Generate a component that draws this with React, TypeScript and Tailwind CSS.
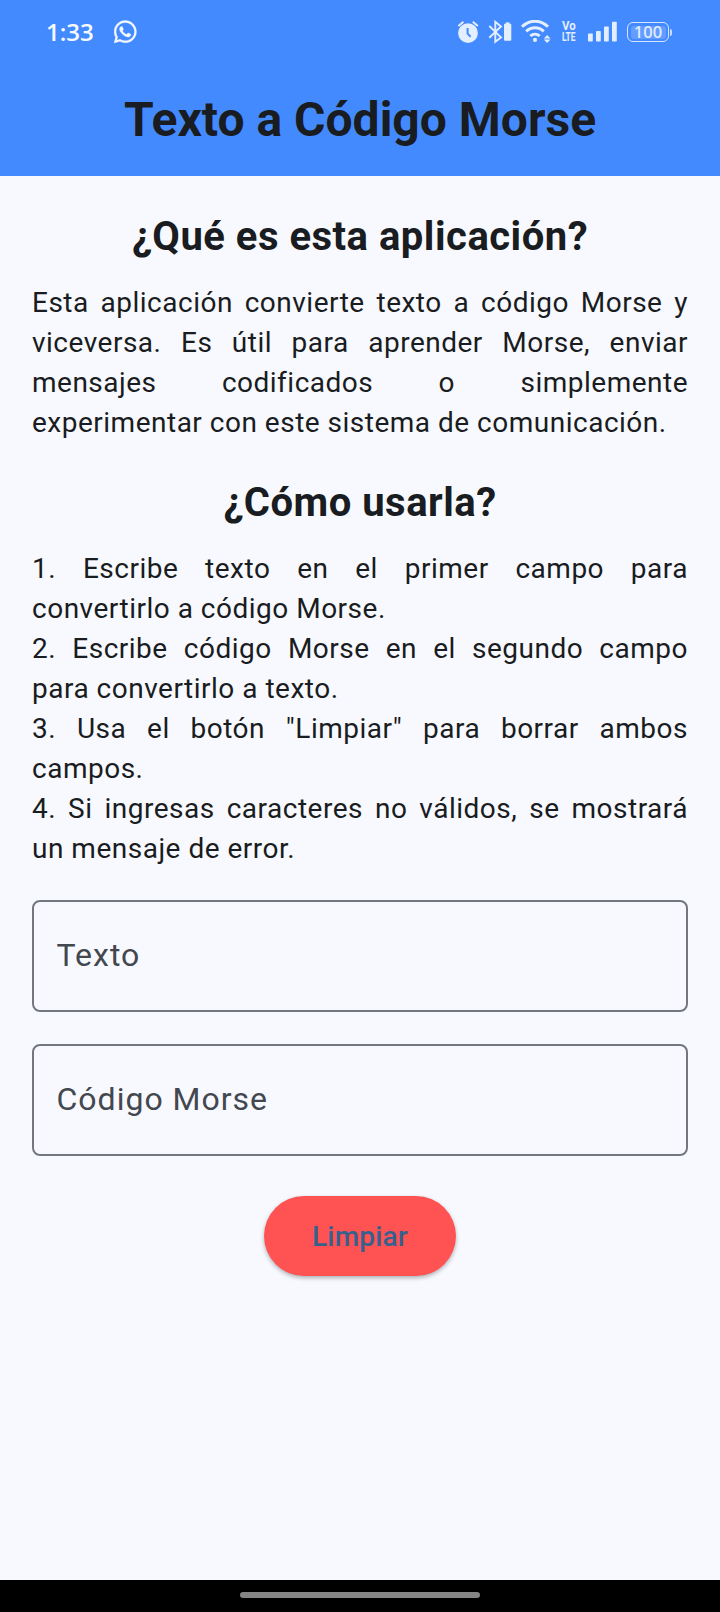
import React from "react";
import { FaWhatsapp } from "react-icons/fa";

const STEPS = [
  "1. Escribe texto en el primer campo para convertirlo a código Morse.",
  "2. Escribe código Morse en el segundo campo para convertirlo a texto.",
  '3. Usa el botón "Limpiar" para borrar ambos campos.',
  "4. Si ingresas caracteres no válidos, se mostrará un mensaje de error.",
];

function AlarmIcon() {
  return (
    <svg width="23" height="24" viewBox="457 20.5 23 24" fill="none">
      <circle cx="468" cy="33.6" r="9.9" fill="#e3eeff" />
      <path d="M458.4 26.4 463.4 22.2M472.8 22.2 477.8 26.4" stroke="#e3eeff" strokeWidth="2" />
      <path d="M467.6 28.5V34.2L470.6 37.2" stroke="#448aff" strokeWidth="2" />
    </svg>
  );
}

function BluetoothIcon() {
  return (
    <svg width="24" height="24" viewBox="488 20.5 24 24" fill="none">
      <path d="M489.3 26.5 501 37.9 495.3 42.3V22.3L501 27 489.3 38.3" stroke="#e3eeff" strokeWidth="1.9" />
      <rect x="504" y="24.3" width="7.3" height="17" rx="1" fill="#e3eeff" />
      <rect x="505.7" y="22.9" width="3.8" height="2" fill="#e3eeff" />
    </svg>
  );
}

function WifiIcon() {
  return (
    <svg width="31" height="24" viewBox="520 20.5 31 24" fill="none">
      <g stroke="#e3eeff" strokeWidth="3">
        <path d="M522 27.3C529.5 19.9 540.5 19.9 548 27.3" />
        <path d="M526.2 31.9C531.3 26.9 538.7 26.9 543.8 31.9" />
        <path d="M530.3 36.5C533 34 537 34 539.7 36.5" />
      </g>
      <circle cx="535" cy="40.4" r="2.1" fill="#e3eeff" />
      <path d="M543.8 39 547.1 35.6 550.5 39ZM543.8 40.1H550.5L547.1 43.4Z" fill="#e3eeff" />
    </svg>
  );
}

function SignalIcon() {
  return (
    <svg width="29" height="24" viewBox="588 20.5 29 24" fill="#e3eeff">
      <rect x="588" y="34" width="4.8" height="8" rx=".8" />
      <rect x="596" y="31.6" width="4.8" height="10.4" rx=".8" />
      <rect x="604" y="27" width="4.8" height="15" rx=".8" />
      <rect x="612" y="22.2" width="4.8" height="19.8" rx=".8" />
    </svg>
  );
}

function StatusBar() {
  return (
    <div className="flex h-16 items-center pr-12 pl-[46px]">
      <span className="w-[68px] font-['Open_Sans','Noto_Sans',sans-serif] text-[24px] leading-6 font-semibold text-[#f6faff]">
        1:33
      </span>
      <FaWhatsapp className="h-[25.5px] w-[22.5px] stroke-[#f6faff] text-[#f6faff]" strokeWidth={8} />
      <div className="ml-auto flex items-center">
        <AlarmIcon />
        <span className="w-2" />
        <BluetoothIcon />
        <span className="w-2" />
        <WifiIcon />
        <span className="ml-[11px] flex w-[26px] flex-col text-[12px] leading-[11px] font-bold text-[#e3eeff]">
          <span className="w-6 origin-left scale-x-[0.95]">Vo</span>
          <span className="w-6 origin-left scale-x-[0.7]">LTE</span>
        </span>
        <SignalIcon />
        <div className="ml-2.5 flex items-center">
          <div className="flex h-5 w-[42px] items-center justify-center rounded-[6px] border-[1.5px] border-[#d6e6ff]">
            <span className="flex h-[13px] w-[35px] items-center justify-center rounded-[3px] bg-[#639dff] font-['Noto_Sans','Open_Sans',sans-serif] text-[16.5px] leading-none font-medium text-[#e3eeff]">
              100
            </span>
          </div>
          <span className="ml-px h-[7px] w-[2px] rounded-r bg-[#c7dcff]" />
        </div>
      </div>
    </div>
  );
}

function Heading({ children }: { children: React.ReactNode }) {
  return (
    <h2 className="text-center text-[40px] leading-[58px] font-bold tracking-[0.5px]">{children}</h2>
  );
}

function Field({ label }: { label: string }) {
  return (
    <div className="flex h-28 items-center rounded-lg border-2 border-[#73777f] px-[22.5px] pb-0.5 text-[32px] tracking-[1px] text-[#43474e]">
      {label}
    </div>
  );
}

export default function App() {
  return (
    <div className="flex h-[1612px] w-[720px] flex-col bg-[#f8f9ff] font-['Roboto',sans-serif] text-[#191c20]">
      <header className="h-44 bg-[#448aff]">
        <StatusBar />
        <h1 className="flex h-28 items-center justify-center text-[48px] font-bold">
          Texto a Código Morse
        </h1>
      </header>

      <main className="flex flex-1 flex-col p-8">
        <Heading>¿Qué es esta aplicación?</Heading>
        <p className="mt-[17px] text-justify text-[28px] leading-10 tracking-[0.5px]">
          Esta aplicación convierte texto a código Morse y viceversa. Es útil para aprender Morse,
          enviar mensajes codificados o simplemente experimentar con este sistema de comunicación.
        </p>

        <div className="mt-[31px]">
          <Heading>¿Cómo usarla?</Heading>
        </div>
        <div className="mt-[17px] text-justify text-[28px] leading-10 tracking-[0.5px]">
          {STEPS.map((step) => (
            <p key={step}>{step}</p>
          ))}
        </div>

        <div className="mt-[31px] flex flex-col gap-8">
          <Field label="Texto" />
          <Field label="Código Morse" />
        </div>

        <button className="mt-10 h-20 w-48 self-center rounded-full bg-[#ff5252] pt-0.5 text-[28px] font-medium tracking-[0.2px] text-[#36618e] shadow-[0_2px_4px_rgba(0,0,0,0.3)]">
          Limpiar
        </button>
      </main>

      <footer className="flex h-8 items-center justify-center bg-black pb-0.5">
        <span className="h-1.5 w-60 rounded-full bg-[#858585]" />
      </footer>
    </div>
  );
}
